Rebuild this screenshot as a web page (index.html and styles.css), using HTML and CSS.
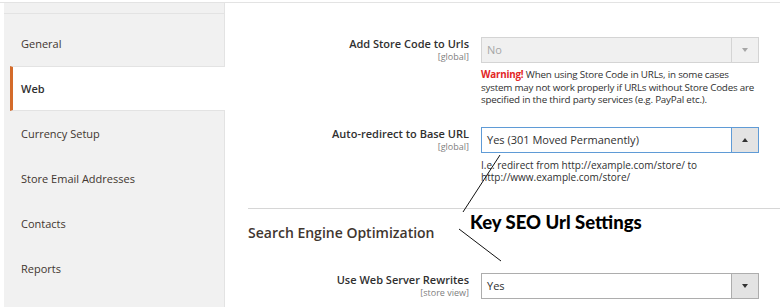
FILE: index.html
```html
<!DOCTYPE html>
<html lang="en">
<head>
  <meta charset="UTF-8">
  <title>Configuration - Web</title>
  <link rel="stylesheet" href="styles.css">
</head>
<body>
  <div class="page">
    <nav class="tabs">
      <div class="tabs-top"></div>
      <ul class="tab-list">
        <li class="tab">General</li>
        <li class="tab active">Web</li>
        <li class="tab">Currency Setup</li>
        <li class="tab">Store Email Addresses</li>
        <li class="tab">Contacts</li>
        <li class="tab">Reports</li>
      </ul>
    </nav>

    <main class="content">
      <div class="config-group">
        <div class="field">
          <div class="label">
            <span class="label-text">Add Store Code to Urls</span>
            <span class="scope">[global]</span>
          </div>
          <div class="control">
            <div class="select disabled">
              <span class="value">No</span>
              <span class="arrow"><i class="tri down"></i></span>
            </div>
            <p class="note warn-note"><strong class="warn">Warning!</strong> When using Store Code in URLs, in some cases<br>system may not work properly if URLs without Store Codes are<br>specified in the third party services (e.g. PayPal etc.).</p>
          </div>
        </div>

        <div class="field">
          <div class="label">
            <span class="label-text">Auto-redirect to Base URL</span>
            <span class="scope">[global]</span>
          </div>
          <div class="control">
            <div class="select focused">
              <span class="value">Yes (301 Moved Permanently)</span>
              <span class="arrow"><i class="tri up"></i></span>
            </div>
            <p class="note">I.e. redirect from http://example.com/store/ to http://www.example.com/store/</p>
          </div>
        </div>
      </div>

      <h2 class="section-title">Search Engine Optimization</h2>

      <div class="field">
        <div class="label">
          <span class="label-text">Use Web Server Rewrites</span>
          <span class="scope">[store view]</span>
        </div>
        <div class="control">
          <div class="select">
            <span class="value">Yes</span>
            <span class="arrow"><i class="tri down"></i></span>
          </div>
        </div>
      </div>
    </main>

    <!-- annotation drawn over the screenshot -->
    <div class="callout">Key SEO Url Settings</div>
    <svg class="callout-lines" width="780" height="307" viewBox="0 0 780 307">
      <line x1="500" y1="155" x2="463" y2="212" stroke="#111" stroke-width="1"/>
      <line x1="459" y1="229" x2="501" y2="261" stroke="#111" stroke-width="1"/>
    </svg>
  </div>
</body>
</html>
```

FILE: styles.css
```css
body {
  margin: 0;
  padding-top: 2px;
  font-family: 'Open Sans', sans-serif;
  color: #303030;
  background: #fff;
  overflow: hidden;
}
.page {
  position: relative;
  display: flex;
  height: 305px;
  border-top: 1px solid #e3e3e3;
}
.tabs {
  margin-left: 4px;
  width: 220px;
  flex-shrink: 0;
  background: #f1f1f1;
  border-right: 1px solid #e3e3e3;
}
.tabs-top {
  height: 10px;
  border-bottom: 1px solid #e3e3e3;
}
.tab-list {
  list-style: none;
  margin: 0;
  padding: 7px 0 0 6px;
}
.tab {
  height: 45px;
  line-height: 45px;
  padding-left: 11px;
  font-size: 11px;
  color: #41362f;
  box-sizing: border-box;
}
.tab.active {
  background: #fff;
  border-top: 1px solid #e3e3e3;
  border-bottom: 1px solid #e3e3e3;
  border-left: 3px solid #d46b2a;
  padding-left: 8px;
  line-height: 43px;
  font-weight: 600;
  color: #303030;
  margin-right: -1px;
}
.content {
  flex: 1;
  padding: 34px 0 0 23px;
}
.config-group {
  border-bottom: 1px solid #d6d6d6;
  padding-bottom: 4px;
}
.field {
  display: grid;
  grid-template-columns: 221px 278px;
  column-gap: 12px;
  margin-bottom: 20px;
}
.label {
  text-align: right;
}
.label-text {
  display: block;
  font-size: 11px;
  font-weight: 600;
  line-height: 14px;
  color: #303030;
}
.scope {
  display: block;
  font-size: 9px;
  line-height: 11px;
  color: #808080;
}
.select {
  display: flex;
  height: 26px;
  box-sizing: border-box;
  border: 1px solid #adadad;
  background: #fff;
}
.select .value {
  flex: 1;
  padding-left: 5px;
  font-size: 11px;
  line-height: 24px;
  color: #303030;
}
.select .arrow {
  width: 26px;
  border-left: 1px solid #adadad;
  background: #e3e3e3;
  display: flex;
  align-items: center;
  justify-content: center;
}
.select.disabled {
  background: #f0f0f0;
  border-color: #d4d4d4;
}
.select.disabled .value {
  color: #a6a6a6;
}
.select.disabled .arrow {
  background: #f0f0f0;
  border-left-color: #d4d4d4;
}
.select.focused,
.select.focused .arrow {
  border-color: #5f9bd6;
}
.tri {
  width: 0;
  height: 0;
  border-left: 3px solid transparent;
  border-right: 3px solid transparent;
}
.tri.down {
  border-top: 4px solid #333;
}
.tri.up {
  border-bottom: 4px solid #333;
}
.disabled .tri.down {
  border-top-color: #a6a6a6;
}
.note {
  margin: 6px 0 0;
  font-size: 10px;
  line-height: 12.5px;
  color: #303030;
}
.warn-note {
  font-size: 9.8px;
  letter-spacing: -0.2px;
  white-space: nowrap;
}
.warn {
  color: #e22626;
  font-weight: 700;
}
.section-title {
  margin: 0 0 30px;
  padding: 14px 0 0;
  font-size: 14px;
  font-weight: 600;
  line-height: 20px;
  color: #41362f;
}
.callout {
  position: absolute;
  left: 470px;
  top: 208px;
  font-family: 'Lato', sans-serif;
  font-weight: 900;
  font-size: 18.5px;
  line-height: 22px;
  color: #000;
}
.callout-lines {
  position: absolute;
  left: 0;
  top: -3px;
  pointer-events: none;
}
```
